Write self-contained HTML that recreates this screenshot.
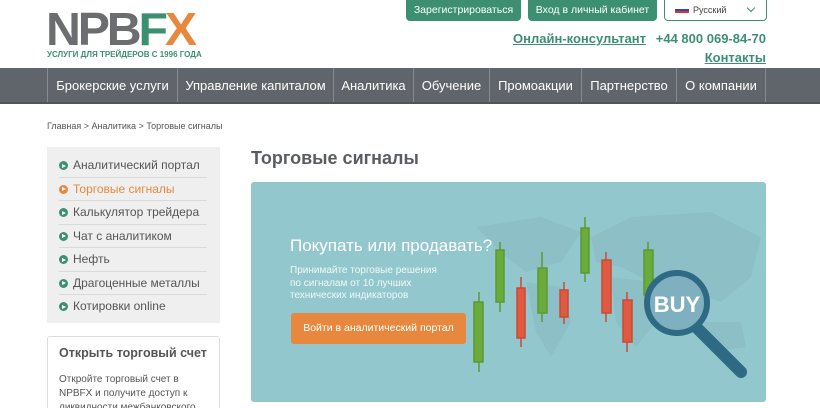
<!DOCTYPE html>
<html><head><meta charset="utf-8"><style>
*{margin:0;padding:0;box-sizing:border-box}
html,body{width:820px;height:408px;overflow:hidden}
body{background:#fff;font-family:"Liberation Sans","DejaVu Sans",sans-serif;position:relative;color:#555}
.a{position:absolute}
.btn{position:absolute;top:0;height:21px;background:#3d8f72;color:#fff;font-size:10.5px;line-height:21px;text-align:center;border-radius:0 0 4px 4px;white-space:nowrap}
.nav{position:absolute;top:68px;left:0;width:820px;height:36px;background:#60656b;border-bottom:2px solid #50555a}
.nav div{position:absolute;top:0;height:34px;line-height:36px;color:#fff;font-size:13px;text-align:center;border-left:1px solid #878b90;white-space:nowrap}
.side{position:absolute;left:47px;top:147px;width:173px;height:176px;background:#efefef}
.it{position:absolute;left:12px;width:148px;height:23.5px;font-size:12px;line-height:23px;color:#555;padding-left:14px;border-bottom:1px solid #dadada;white-space:nowrap}
.it:before{content:"";position:absolute;left:0;top:7px;width:9px;height:9px;border-radius:50%;background:#3d8f72}
.it:after{content:"";position:absolute;left:3px;top:9.5px;border-left:4px solid #fff;border-top:2px solid transparent;border-bottom:2px solid transparent}
.side .it.o:before{background:#e8883e}
</style></head><body>
<div class="a" style="left:46px;top:6px;font-size:46px;font-weight:bold;letter-spacing:-3px;line-height:46px;color:#6b6d70;transform:scaleX(1.05);transform-origin:left">NPB<span style="color:#3d8f72">F</span><span style="color:#e8883e">X</span></div>
<div class="a" style="left:47px;top:50px;font-size:8px;font-weight:bold;color:#3d8f72;white-space:nowrap">УСЛУГИ ДЛЯ ТРЕЙДЕРОВ С 1996 ГОДА</div>
<div class="btn" style="left:406px;width:115px">Зарегистрироваться</div>
<div class="btn" style="left:528px;width:129px">Вход в личный кабинет</div>
<div class="a" style="left:664px;top:0;width:103px;height:21px;border:1px solid #3d8f72;border-top:none;border-radius:0 0 4px 4px;font-size:9px;line-height:20px;padding-left:28px;color:#444">Русский
<div class="a" style="left:10px;top:7px;width:14px;height:6px;background:linear-gradient(#fff 33%,#2a48c0 33% 66%,#d32 66%)"></div>
<div class="a" style="right:12px;top:5px;width:6px;height:6px;border-right:1.5px solid #3d8f72;border-bottom:1.5px solid #3d8f72;transform:rotate(45deg)"></div></div>
<div class="a" style="left:513px;top:31px;font-size:13px;font-weight:bold;color:#3d8f72;text-decoration:underline;white-space:nowrap">Онлайн-консультант</div>
<div class="a" style="left:649px;top:31px;width:117px;text-align:right;font-size:13px;font-weight:bold;color:#3d8f72;white-space:nowrap">+44 800 069-84-70</div>
<div class="a" style="left:700px;top:50px;width:66px;text-align:right;font-size:13px;font-weight:bold;color:#3d8f72;text-decoration:underline">Контакты</div>
<div class="nav">
<div style="left:47px;width:130px">Брокерские услуги</div>
<div style="left:177px;width:156px">Управление капиталом</div>
<div style="left:333px;width:80px">Аналитика</div>
<div style="left:413px;width:76px">Обучение</div>
<div style="left:489px;width:92px">Промоакции</div>
<div style="left:581px;width:95px">Партнерство</div>
<div style="left:676px;width:90px;border-right:1px solid #878b90">О компании</div>
</div>
<div class="a" style="left:47px;top:121px;font-size:9px;color:#555">Главная &gt; Аналитика &gt; Торговые сигналы</div>
<div class="side">
<div class="it" style="top:7px">Аналитический портал</div>
<div class="it o" style="top:30.5px;color:#e8883e">Торговые сигналы</div>
<div class="it" style="top:54px">Калькулятор трейдера</div>
<div class="it" style="top:77.5px">Чат с аналитиком</div>
<div class="it" style="top:101px">Нефть</div>
<div class="it" style="top:124.5px">Драгоценные металлы</div>
<div class="it" style="top:148px;border:none">Котировки online</div>
</div>
<div class="a" style="left:47px;top:336px;width:173px;height:80px;border:1px solid #ddd;border-radius:3px;padding:9px 11px">
<div style="font-size:12.5px;font-weight:bold;color:#555;white-space:nowrap">Открыть торговый счет</div>
<div style="font-size:10px;line-height:14px;margin-top:13px;color:#555">Откройте торговый счет в NPBFX и получите доступ к ликвидности межбанковского</div></div>
<div class="a" style="left:251px;top:148px;font-size:18px;font-weight:bold;color:#5a5d60">Торговые сигналы</div>
<div class="a" style="left:251px;top:182px;width:515px;height:220px;background:#93c7ce;border-radius:3px;overflow:hidden">
<svg width="515" height="220" style="position:absolute;left:0;top:0">
<g fill="#8cc0c6"><path d="M225 45 L290 35 L330 50 L310 80 L275 90 L255 75 Z"/><path d="M275 100 L310 105 L320 140 L300 175 L285 150 Z"/><path d="M340 55 L380 35 L460 30 L510 55 L500 95 L470 120 L440 110 L400 100 L370 85 L345 80 Z"/><path d="M360 95 L400 100 L405 140 L385 165 L365 140 Z"/><path d="M450 140 L490 140 L495 165 L460 170 Z"/></g>
<g stroke-width="1.5">
<g stroke="#5b9a34" fill="#6aab3c"><line x1="228" y1="110" x2="228" y2="190"/><rect x="223" y="120" width="9" height="60"/><line x1="249" y1="60" x2="249" y2="130"/><rect x="245" y="68" width="8" height="52"/><line x1="291" y1="70" x2="291" y2="140"/><rect x="287" y="86" width="9" height="45"/><line x1="334" y1="35" x2="334" y2="100"/><rect x="330" y="46" width="8" height="45"/><line x1="397" y1="60" x2="397" y2="125"/><rect x="393" y="68" width="9" height="45"/></g>
<g stroke="#c84a36" fill="#df5a41"><line x1="270" y1="95" x2="270" y2="165"/><rect x="266" y="106" width="8" height="50"/><line x1="313" y1="100" x2="313" y2="142"/><rect x="309" y="108" width="8" height="27"/><line x1="355" y1="70" x2="355" y2="140"/><rect x="351" y="78" width="9" height="53"/><line x1="376" y1="110" x2="376" y2="170"/><rect x="372" y="118" width="9" height="42"/></g>
</g>
<line x1="445" y1="145" x2="490" y2="190" stroke="#2f6a84" stroke-width="12" stroke-linecap="round"/>
<circle cx="426" cy="121" r="30" fill="#7fb0bf" stroke="#2f6a84" stroke-width="6"/>
<text x="426" y="130" font-size="22" font-weight="bold" fill="#fff" text-anchor="middle" font-family="Liberation Sans">BUY</text>
</svg>
<div class="a" style="left:39px;top:54px;font-size:17px;color:#fff;white-space:nowrap">Покупать или продавать?</div>
<div class="a" style="left:39px;top:83px;font-size:10px;line-height:12.5px;color:#f0f8f8">Принимайте торговые решения<br>по сигналам от 10 лучших<br>технических индикаторов</div>
<div class="a" style="left:40px;top:131px;width:175px;height:31px;background:#e8883e;border-radius:3px;color:#fff;font-size:10.5px;line-height:31px;text-align:center">Войти в аналитический портал</div>
</div>
</body></html>
